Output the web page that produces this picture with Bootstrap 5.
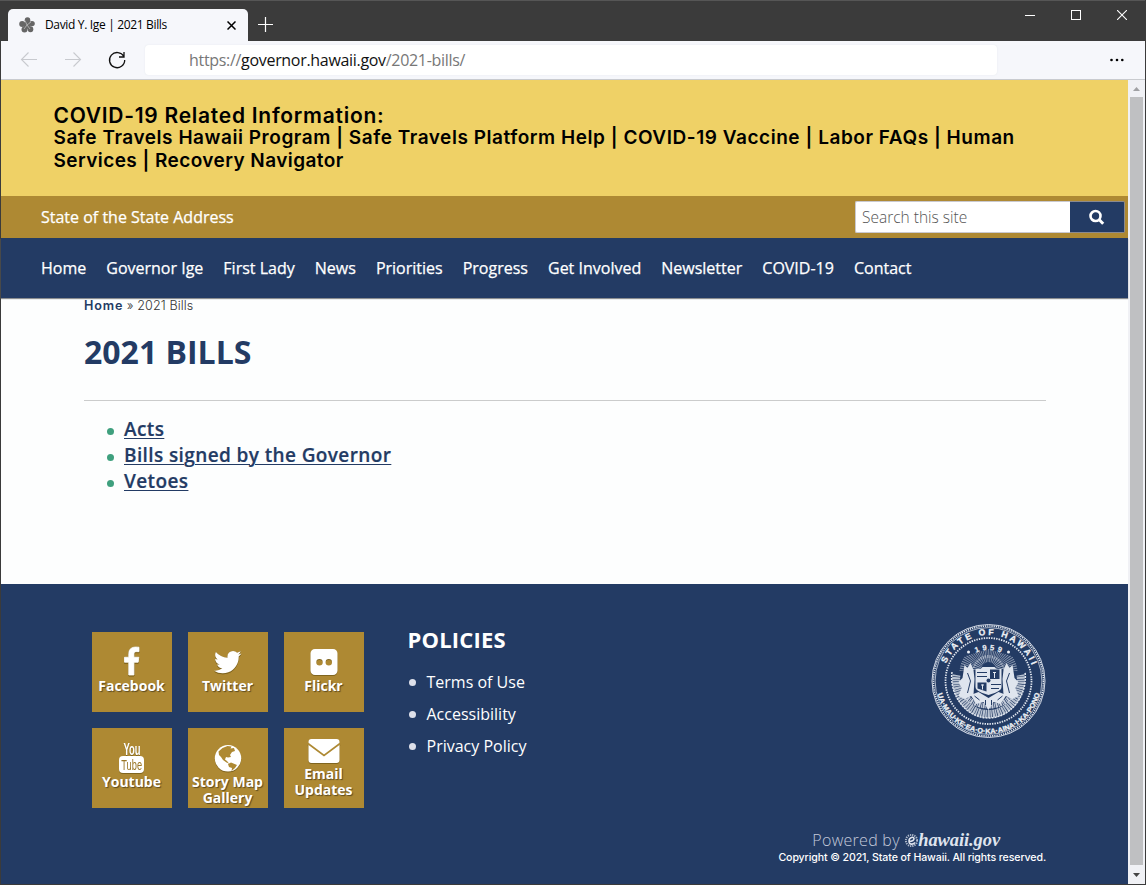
<!DOCTYPE html>
<html lang="en">
<head>
<meta charset="utf-8">
<meta name="viewport" content="width=device-width, initial-scale=1">
<title>David Y. Ige | 2021 Bills</title>
<link href="https://cdn.jsdelivr.net/npm/bootstrap@5.3.0/dist/css/bootstrap.min.css" rel="stylesheet">
<style>
:root{--navy:#233b64;--gold:#ae8933}
body{height:885px;overflow:hidden;background:#3b3b3b;font-family:"Open Sans","Liberation Sans",sans-serif;line-height:1.2;color:#000}
svg{display:block;flex:none}
a{color:inherit;text-decoration:none}
.window-frame{height:885px;padding:0 1px 1px}
.titlebar{height:41px;margin-left:-1px;padding-left:8px;border-top:1px solid #565656;color:#fff}
.tab-active{width:240px;height:32px;margin-top:8px;padding:0 12px 0 11px;border-radius:5px 5px 0 0;background:#f6f7fb;color:#000;font-size:12px}
.tab-title{letter-spacing:-.34px;margin-left:10px}
.new-tab{margin:16px 0 0 10px}
.win-btn{width:46px;height:28px}
.toolbar{height:39px;background:#f6f7fb;border-bottom:1px solid #c9cbcf}
.address{width:852px;height:30px;margin-left:18px;padding:2px 0 0 44px;border-radius:4px;background:#fff;font-size:16px;letter-spacing:-.31px;color:#111;box-shadow:0 0 2px #e6e8ee}
.address span{color:#777}
.more{margin-right:21px}
.viewport-row{height:804px}
.page{width:1127px;background:#fdfefe}
.covid{height:116px;background:#efd166;padding:24px 53px 0 52.5px;font-family:Inter,sans-serif;font-weight:600;font-size:19px;line-height:23px;white-space:nowrap}
.covid .c-title{font-size:21px;letter-spacing:.73px}
.c1{letter-spacing:.54px;margin-top:-1px}
.c2{letter-spacing:.43px}
.gold-bar{height:42px;background:var(--gold);color:#fff;padding:0 3px 0 40px;font-size:16px}
.state-link,.main-nav a{position:relative;top:1px;-webkit-text-stroke:.25px #fff}
.search-input{width:215px;height:32px;border:1px solid #c9c9d0;border-right:0;border-radius:2px 0 0 2px;background:#fff;padding:0 6px;color:#555;font-size:15.5px;font-weight:300}
.search-btn{width:55px;height:32px;border:1px solid #8a8a90;border-left:0;border-radius:0 2px 2px 0;background:var(--navy)}
.main-nav{height:60px;gap:20.050px;background:var(--navy);color:#fff;padding-left:40px;font-size:16px;box-shadow:0 1px 1px #8b8d90;position:relative;white-space:nowrap}
.content{height:286px;padding:0 82px 0 83px;color:var(--navy)}
.crumb{font:300 12.6px/15px Inter,sans-serif;color:#333;letter-spacing:.08px}
.crumb b{font-weight:600;color:var(--navy);letter-spacing:.85px}
h1{font-size:32px;font-weight:700;line-height:40px;margin:19px 0 28px}
.rule{border-top:1px solid #cbcccc}
.bill-list{padding-left:40px;margin:15px 0 0;font-size:19px;line-height:26px;font-weight:600;letter-spacing:.39px}
.bill-list a{text-decoration:underline;text-decoration-thickness:1.4px;text-underline-offset:2px;-webkit-text-stroke:.2px var(--navy)}
.dots li{position:relative;list-style:none}
.dots li::before{content:"";position:absolute;width:7px;height:7px;border-radius:50%;background:#3fa07e;left:-17px;top:12px}
.site-footer{height:300px;background:var(--navy);color:#fff;padding:48px 82px 0 91px}
.tiles{display:grid;grid-template-columns:repeat(3,80px);grid-auto-rows:80px;gap:16px}
.tile{background:var(--gold);padding:14px 1px 0 0;font-size:14px;font-weight:700;line-height:16px;text-align:center;text-shadow:1px 1px 1px #5d4b20;white-space:nowrap}
.tile.two-line{padding-top:6px}
.tile svg{margin:0 auto;filter:drop-shadow(0 1px 0 #80651f)}
.policies{margin-left:43.500px;margin-top:-7px}
.policies h2{font-size:22px;letter-spacing:.2px;font-weight:700;line-height:28px;margin:0 0 13px}
.policies ul{padding-left:19px;font-size:16px;line-height:32px;margin:0}
.policies li::before{background:#dde0ea;left:-18px;top:13px}
.legal{height:242px;margin-top:-9px}
.powered{font-size:16px;font-weight:300;color:#c3cadb;line-height:20px;height:21px;padding-bottom:1px;letter-spacing:.28px;margin-right:46px}
.eh{font:italic 700 18.500px/20px "Liberation Serif",serif;color:#dfe4ee;letter-spacing:-.1px}
.copyline{font:500 10.600px/14px Inter,sans-serif;letter-spacing:-.11px}
.scrollbar{width:17px;background:#f0f1f5}
.scroll-thumb{width:13px;height:768px;background:#bfc0c2}
</style>
</head>
<body>
<div class="window-frame">
  <header class="titlebar d-flex align-items-start">
    <div class="tab-active d-flex align-items-center">
      <svg width="16" height="16" viewBox="0 0 16 16"><g fill="#666"><ellipse cx="8.500" cy="3.300" rx="2.800" ry="3"/><ellipse cx="13" cy="6.600" rx="2.800" ry="2.700"/><ellipse cx="11.500" cy="12.300" rx="2.800" ry="3"/><ellipse cx="5.500" cy="12.500" rx="3" ry="3"/><ellipse cx="3.200" cy="7" rx="3" ry="3"/><circle cx="8" cy="8.300" r="3.600"/></g><path d="M8 8 6 3.500M8 8l4-3M8 8l3 4M8 8l-3 4" stroke="#bbb" stroke-width=".8"/></svg>
      <span class="tab-title">David Y. Ige | 2021 Bills</span>
      <svg class="ms-auto" width="9" height="9" viewBox="0 0 9 9"><path d="M.5.5l8 8M8.500.5l-8 8" stroke="#000" stroke-width="1.500"/></svg>
    </div>
    <svg class="new-tab" width="15" height="15"><path d="M7.500 0v15M0 7.500h15" stroke="#fff" stroke-width="1.200"/></svg>
    <div class="d-flex ms-auto">
      <div class="win-btn d-flex align-items-center justify-content-center"><svg width="10" height="10"><path d="M0 5.500h10" stroke="#fff"/></svg></div>
      <div class="win-btn d-flex align-items-center justify-content-center"><svg width="10" height="10"><rect x=".5" y=".5" width="9" height="9" fill="none" stroke="#fff"/></svg></div>
      <div class="win-btn d-flex align-items-center justify-content-center"><svg width="10" height="10"><path d="M0 0l10 10M10 0 0 10" stroke="#fff" stroke-width="1.100"/></svg></div>
    </div>
  </header>
  <div class="toolbar d-flex align-items-center">
    <svg width="126" height="38" fill="none" stroke="#c8cacf" stroke-width="1.100"><path d="M36 18.500H20.500M27.500 11.500l-7 7 7 7M64 18.500h15.500M72.500 11.500l7 7-7 7"/><path stroke="#111" stroke-width="1.300" d="M122.800 15.500A7.600 7.600 0 1 0 123.700 19M123 11v5h-5"/></svg>
    <div class="address d-flex align-items-center"><div><span>https://</span>governor.hawaii.gov<span>/2021-bills/</span></div></div>
    <svg class="more ms-auto" width="18" height="4"><circle cx="5.500" cy="2" r="1.300"/><circle cx="11" cy="2" r="1.300"/><circle cx="16.300" cy="2" r="1.300"/></svg>
  </div>
  <div class="viewport-row d-flex">
    <div class="page">
      <section class="covid"><div class="c-title">COVID-19 Related Information:</div><div class="c1">Safe Travels Hawaii Program | Safe Travels Platform Help | COVID-19 Vaccine | Labor FAQs | Human</div><div class="c2">Services | Recovery Navigator</div></section>
      <div class="gold-bar d-flex align-items-center"><a class="state-link" href="#">State of the State Address</a>
        <div class="d-flex ms-auto"><div class="search-input d-flex align-items-center">Search this site</div><div class="search-btn d-flex align-items-center justify-content-center"><svg width="16" height="16" fill="none" stroke="#fff"><circle cx="6.500" cy="7" r="5" stroke-width="2.600"/><path d="M10 10.500l4.200 4.200" stroke-width="3"/></svg></div></div>
      </div>
      <nav class="main-nav d-flex align-items-center"><a href="#">Home</a><a href="#">Governor Ige</a><a href="#">First Lady</a><a href="#">News</a><a href="#">Priorities</a><a href="#">Progress</a><a href="#">Get Involved</a><a href="#">Newsletter</a><a href="#">COVID-19</a><a href="#">Contact</a></nav>
      <main class="content"><div class="crumb"><b>Home</b> » 2021 Bills</div><h1>2021 BILLS</h1><div class="rule"></div>
        <ul class="bill-list dots"><li><a href="#">Acts</a></li><li><a href="#">Bills signed by the Governor</a></li><li><a href="#">Vetoes</a></li></ul></main>
      <footer class="site-footer d-flex align-items-start">
        <div class="tiles">
          <a class="tile" href="#"><svg width="40" height="32"><svg x="12.500" y="1" width="14.500" height="28" viewBox="479 0 864 1664"><path fill="#fff" stroke="#fff" stroke-width="50" d="M1343 12v264h-157q-86 0-116 36t-30 108v189h293l-39 296h-254v759h-306v-759h-255v-296h255v-218q0-186 104-288.500t277-102.500q147 0 228 12z"/></svg></svg>Facebook</a>
          <a class="tile" href="#"><svg width="40" height="32"><svg x="6" y="4.800" width="27.500" height="22.500" viewBox="108 256 1576 1280"><path fill="#fff" d="M1684 408q-67 98-162 167 1 14 1 42 0 130-38 259.500t-115.500 248.500-184.500 210.500-258 146-323 54.500q-271 0-496-145 35 4 78 4 225 0 401-138-105-2-188-64.500t-114-159.500q33 5 61 5 43 0 85-11-112-23-185.500-111.500t-73.500-205.500v-4q68 38 146 41-66-44-105-115t-39-154q0-88 44-163 121 149 294.500 238.500t371.500 99.500q-8-38-8-74 0-134 94.500-228.500t228.500-94.500q140 0 236 102 109-21 205-78-37 115-142 178 93-10 186-50z"/></svg></svg>Twitter</a>
          <a class="tile" href="#"><svg width="40" height="32"><path fill="#fff" fill-rule="evenodd" d="M11 3h18a4.500 4.500 0 0 1 4.500 4.500v17a4.500 4.500 0 0 1-4.500 4.500h-18A4.500 4.500 0 0 1 6.500 24.500v-17A4.500 4.500 0 0 1 11 3zM12.300 16.300a3.200 3.200 0 1 0 6.400 0a3.200 3.200 0 1 0-6.400 0zM21.600 16.300a3.200 3.200 0 1 0 6.400 0a3.200 3.200 0 1 0-6.400 0z"/></svg>Flickr</a>
          <a class="tile" href="#"><svg width="40" height="32" font-family="Liberation Sans" font-weight="700" fill="#fff" style="text-shadow:none"><text transform="translate(11.500 12.800) scale(.59 1)" font-size="16">You</text><rect x="7" y="14" width="25" height="17" rx="4"/><text transform="translate(9.300 27.500) scale(.64 1)" font-size="14.500" font-weight="400" fill="#9a7626">Tube</text></svg>Youtube</a>
          <a class="tile" href="#"><svg width="40" height="32"><circle cx="20" cy="16.300" r="13.200" fill="#fff"/><path fill="#ae8933" d="M10.500 9.500l4-3.500 5-2 4 .5-1 2 3.500-.5 1 3-3 1-2 3 1 2-3 .5-2-.5-1 2.500 2 1.500 2 2.500-2.500-1-3.500-2.500-2-3-2-2zM20 22l3-1.500 6 2.500-2 3-3.500 3 .5-3-3-1z"/></svg>Story Map<br>Gallery</a>
          <a class="tile two-line" href="#"><svg width="40" height="32"><path fill="#fff" d="M7.500 5h25a3 3 0 0 1 3 3v18a3 3 0 0 1-3 3h-25a3 3 0 0 1-3-3V8a3 3 0 0 1 3-3z"/><path d="M4 9.500L20 21.500 36 9.500" fill="none" stroke="#ae8933" stroke-width="1.600"/></svg>Email<br>Updates</a>
        </div>
        <div class="policies"><h2>POLICIES</h2><ul class="dots"><li><a href="#">Terms of Use</a></li><li><a href="#">Accessibility</a></li><li><a href="#">Privacy Policy</a></li></ul></div>
        <div class="legal ms-auto d-flex flex-column align-items-end">
          <svg width="115" height="116" viewBox="0.500 0 115 116" fill="none" stroke="#e3e8f0">
            <defs><path id="arcTop" d="M12 58a46 46 0 0 1 92 0"/><path id="arcLow" d="M5.500 58a52.500 52.500 0 0 0 105 0"/><path id="arcYear" d="M27 58a31 31 0 0 1 62 0"/><clipPath id="sky"><path d="M58 46 28 48 32 34 58 26 84 34 88 48z"/></clipPath></defs>
            <circle cx="58" cy="58" r="56.500" stroke-width=".9"/><circle cx="58" cy="58" r="55" stroke-width="1.600" stroke-dasharray="1.200 1"/><circle cx="58" cy="58" r="53.400" stroke-width=".7"/>
            <circle cx="58" cy="58" r="43" stroke-width="1.800" stroke-dasharray="1.400 1.100"/>
            <g fill="#eef1f6" stroke="none" font-family="Liberation Sans" font-weight="700">
              <text font-size="8.600" stroke="#eef1f6" stroke-width=".3"><textPath href="#arcTop" startOffset="18" textLength="110">STATE OF HAWAII</textPath></text>
              <text font-size="6.800" stroke="#eef1f6" stroke-width=".3"><textPath href="#arcLow" startOffset="13" textLength="139" lengthAdjust="spacingAndGlyphs">UA·MAU·KE·EA·O·KA·AINA·I·KA·PONO</textPath></text>
              <text font-size="7.600" stroke="#eef1f6" stroke-width=".2"><textPath href="#arcYear" startOffset="35.500" textLength="26">1959</textPath></text>
              <circle cx="38" cy="29" r="1.500"/><circle cx="78" cy="29" r="1.500"/>
            </g>
            <g clip-path="url(#sky)"><circle cx="58" cy="50" r="22" stroke-width="14" stroke-dasharray=".9 .9" opacity=".5"/><circle cx="58" cy="48" r="12" stroke-width="8" stroke-dasharray="1 .9" opacity=".6"/></g>
            <path stroke="none" fill="#233b64" d="M51 46a7 7 0 0 1 14 0z"/>
            <path stroke-width="8" stroke-dasharray="1.500 .7 2.200 .5" opacity=".78" d="M26 52c-3 17 10 39 32 39s35-22 32-39"/>
            <path stroke-width="1.500" stroke-dasharray="2 1" d="M21.500 49c-3 23 14 46 36.500 46s39.500-23 36.500-46"/>
            <path stroke-width="5" stroke-dasharray="2 .7 1 .6" opacity=".85" d="M34 72c7 8 15 11 24 11s17-3 24-11"/>
            <g fill="#dfe5ee" stroke="none"><path d="M34 42l3 3 3-5 3 7 1 9-1 16-9 4-6-3 3-8-3-6 4-4zM82 42l-3 3-3-5-3 7-1 9 1 16 9 4 6-3-3-8 3-6-4-4z"/><path d="M45 46h5l2-2h12l2 2h5v18c0 4-7 6-13 8-6-2-13-4-13-8z"/><path d="M40 72l8-3 10 6 10-6 8 3-6 9-7-2-5 8-5-8-7 2z"/></g>
            <g fill="#233b64" stroke="none"><path d="M59.500 46.500h9.500v9.500h-9.500zM47 59.500h9v9l-9-3z"/><circle cx="58" cy="57.500" r="2"/></g>
            <path stroke="#233b64" stroke-width="1" d="M46.500 49.500h10M46.500 53.500h10M60.500 61.500h10M60.500 65.500h8M37 50l3 8-3 12M79 50l-3 8 3 12M44 73l5 4M72 73l-5 4M55 77v5M61 77v5"/>
            <path stroke-width="1" d="M64 49v6M62.500 49.500h3M52 61.500v5M50.500 62h3"/>
          </svg>
          <div class="powered d-flex align-items-center mt-auto">Powered by&nbsp;<svg width="14" height="16" fill="none" stroke="#dfe4ee"><circle cx="7.500" cy="8.500" r="5.600" stroke-width="2" stroke-dasharray="1.200 1" opacity=".75"/><path d="M5 9.500q5-.5 5-2.800c0-2.500-5-1.500-5 2.300 0 4 4 3.800 6 1.500" stroke-width="1.600"/></svg><span class="eh">hawaii.gov</span></div>
          <div class="copyline">Copyright © 2021, State of Hawaii. All rights reserved.</div>
        </div>
      </footer>
    </div>
    <div class="scrollbar d-flex flex-column align-items-center"><svg width="17" height="17"><path d="M5 11l3.500-4 3.500 4z" fill="#a0a1a4"/></svg><div class="scroll-thumb"></div><svg width="17" height="19"><path d="M5 8l3.500 4L12 8z" fill="#444"/></svg></div>
  </div>
</div>
<script src="https://cdn.jsdelivr.net/npm/bootstrap@5.3.0/dist/js/bootstrap.bundle.min.js"></script>
</body>
</html>
